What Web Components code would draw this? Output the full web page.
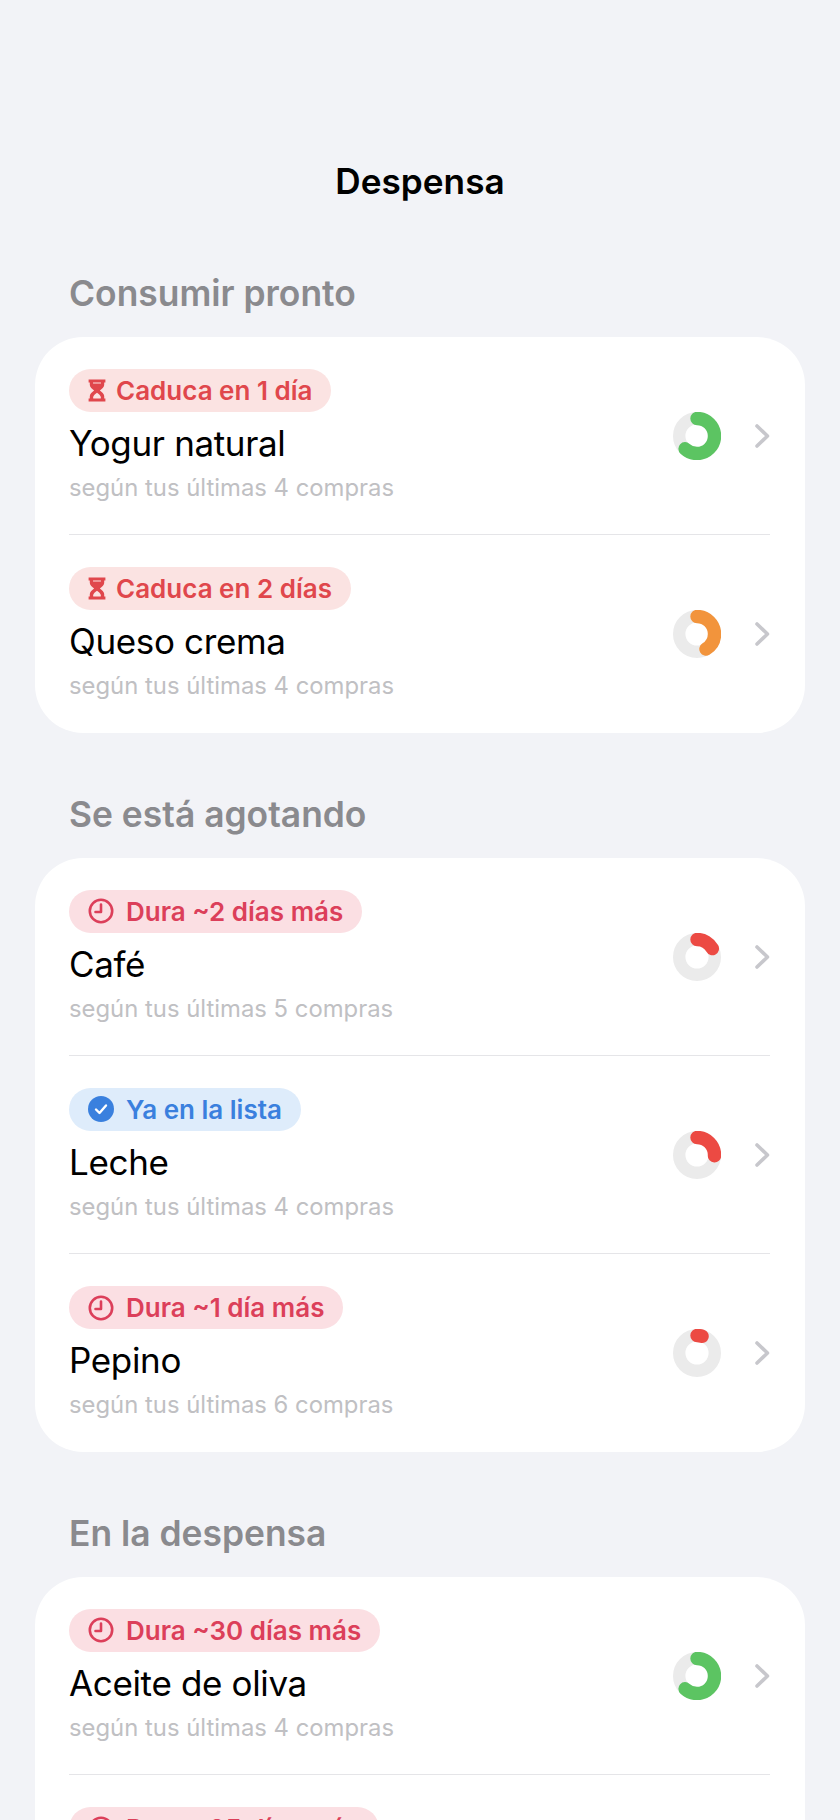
<!DOCTYPE html>
<html lang="es">
<head>
<meta charset="utf-8">
<title>Despensa</title>
<style>
    html, body {
        margin: 0;
        height: 1820px;
        overflow: hidden;
        background: #f2f3f7;
    }
    body {
        font-family: "Inter", "Liberation Sans", sans-serif;
    }
</style>
</head>
<body>
<pantry-screen>
    <pantry-section heading="Consumir pronto">
        <pantry-item name="Yogur natural" note="según tus últimas 4 compras" tag="Caduca en 1 día" kind="expiry" level="223" tone="#5cc462"></pantry-item>
        <pantry-item name="Queso crema" note="según tus últimas 4 compras" tag="Caduca en 2 días" kind="expiry" level="149" tone="#f2943c"></pantry-item>
    </pantry-section>
    <pantry-section heading="Se está agotando">
        <pantry-item name="Café" note="según tus últimas 5 compras" tag="Dura ~2 días más" kind="lasts" level="61" tone="#ec4a43"></pantry-item>
        <pantry-item name="Leche" note="según tus últimas 4 compras" tag="Ya en la lista" kind="listed" level="93" tone="#ec4a43"></pantry-item>
        <pantry-item name="Pepino" note="según tus últimas 6 compras" tag="Dura ~1 día más" kind="lasts" level="17" tone="#ec4a43"></pantry-item>
    </pantry-section>
    <pantry-section heading="En la despensa">
        <pantry-item name="Aceite de oliva" note="según tus últimas 4 compras" tag="Dura ~30 días más" kind="lasts" level="223" tone="#5cc462"></pantry-item>
        <pantry-item tag="Dura ~25 días más" kind="lasts" level="223" tone="#5cc462"></pantry-item>
    </pantry-section>
</pantry-screen>

<script>
/** Iconos de las etiquetas */
const TAG_ICONS = {
    expiry: `<svg viewBox="1.500 0.500 15 23" width="18" height="23" preserveAspectRatio="none"><path fill="currentColor" d="M2 1h14v3h-1v2.500c0 2.200-2 3.900-3.600 5.500 1.600 1.600 3.600 3.300 3.600 5.500V20h1v3H2v-3h1v-2.500c0-2.200 2-3.900 3.600-5.500C5 10.400 3 8.700 3 6.500V4H2z"/><path fill="#fbe3e2" d="M5.700 4h6.600v1H5.700zM9 14.300c-1.500 1.400-3 2.800-3.200 4.200-.1.500 0 1 .1 1.500h6.200c.1-.5.2-1 .1-1.500-.2-1.400-1.700-2.800-3.200-4.200z"/></svg>`,
    lasts: `<svg viewBox="0 0 26 26" width="26" height="26" fill="none" stroke="currentColor" stroke-width="2.600" stroke-linecap="round" stroke-linejoin="round"><circle cx="13" cy="13" r="11.200"/><path d="M13 6.500V14H7.500"/></svg>`,
    listed: `<svg viewBox="0 0 26 26" width="26" height="26"><circle cx="13" cy="13" r="13" fill="currentColor"/><path d="M8 13.500l3.500 3.500 6.500-7.500" fill="none" stroke="#fff" stroke-width="2.400" stroke-linecap="round" stroke-linejoin="round"/></svg>`
};

/** Pantalla principal con el título */
class PantryScreen extends HTMLElement {
    constructor() {
        super();
        this.attachShadow({ mode: "open" });
    }

    connectedCallback() {
        this.shadowRoot.innerHTML = `
        <style>
            :host {
                display: block;
                padding: 159px 35px 0;
            }
            h1 {
                margin: 0 0 69px;
                text-align: center;
                font-size: 35.200px;
                line-height: 44px;
                font-weight: 600;
                color: #000;
            }
            .list {
                display: flex;
                flex-direction: column;
            }
            ::slotted(pantry-section) {
                margin-bottom: 60px;
            }
        </style>
        <h1>Despensa</h1>
        <div class="list"><slot></slot></div>`;
    }
}

/** Sección con encabezado y tarjeta */
class PantrySection extends HTMLElement {
    constructor() {
        super();
        this.attachShadow({ mode: "open" });
    }

    connectedCallback() {
        this.shadowRoot.innerHTML = `
        <style>
            :host {
                display: block;
            }
            h2 {
                margin: 0 0 21px 34px;
                font-size: 35.400px;
                line-height: 44px;
                font-weight: 600;
                color: #8a8a8e;
            }
            .card {
                background: #fff;
                border-radius: 48px;
                padding: 0 35px 0 34px;
            }
        </style>
        <h2>${this.getAttribute("heading")}</h2>
        <div class="card"><slot></slot></div>`;
    }
}

/** Fila de producto: etiqueta, nombre, nota, anillo y flecha */
class PantryItem extends HTMLElement {
    constructor() {
        super();
        this.attachShadow({ mode: "open" });
    }

    connectedCallback() {
        const kind = this.getAttribute("kind");
        const level = Number(this.getAttribute("level"));
        this.shadowRoot.innerHTML = `
        <style>
            :host {
                display: flex;
                align-items: center;
                height: 198px;
                box-sizing: border-box;
                border-bottom: 1.500px solid #e5e5e8;
            }
            :host(:last-child) {
                border-bottom: 0;
            }
            .info {
                flex: 1;
                min-width: 0;
            }
            .tag {
                display: inline-flex;
                align-items: center;
                gap: 12px;
                height: 43px;
                padding: 0 19px;
                border-radius: 22px;
                font-size: 26px;
                font-weight: 600;
            }
            .expiry { background: #fbe3e2; color: #e0474c; gap: 10px; }
            .lasts { background: #fbdfe3; color: #dc3f5a; }
            .listed { background: #deecfb; color: #3a80de; }
            .name {
                margin-top: 9px;
                min-height: 44px;
                font-size: 35px;
                line-height: 44px;
                letter-spacing: -0.350px;
                color: #000;
            }
            .note {
                margin-top: 8px;
                min-height: 30px;
                font-size: 23.850px;
                line-height: 30px;
                color: #c0c0c3;
            }
            .ring {
                display: block;
                margin-right: 33px;
            }
            .chevron {
                display: block;
            }
        </style>
        <div class="info">
            <div class="tag ${kind}">${TAG_ICONS[kind]}<span>${this.getAttribute("tag")}</span></div>
            <div class="name">${this.getAttribute("name") || ""}</div>
            <div class="note">${this.getAttribute("note") || ""}</div>
        </div>
        <svg class="ring" viewBox="0 0 48 48" width="48" height="48" fill="none">
            <circle cx="24" cy="24" r="17.800" stroke="#ebebeb" stroke-width="12.400"/>
            <circle cx="24" cy="24" r="17.500" stroke="${this.getAttribute("tone")}" stroke-width="13.400" stroke-linecap="round"
                pathLength="360" stroke-dasharray="${level} 360" transform="rotate(-90 24 24)"/>
        </svg>
        <svg class="chevron" viewBox="0 0 16 26" width="16" height="26" fill="none" stroke="#c7c7cc" stroke-width="3.600" stroke-linecap="round" stroke-linejoin="round">
            <path d="M3 3L13.500 13L3 23"/>
        </svg>`;
    }
}

customElements.define("pantry-screen", PantryScreen);
customElements.define("pantry-section", PantrySection);
customElements.define("pantry-item", PantryItem);
</script>
</body>
</html>
